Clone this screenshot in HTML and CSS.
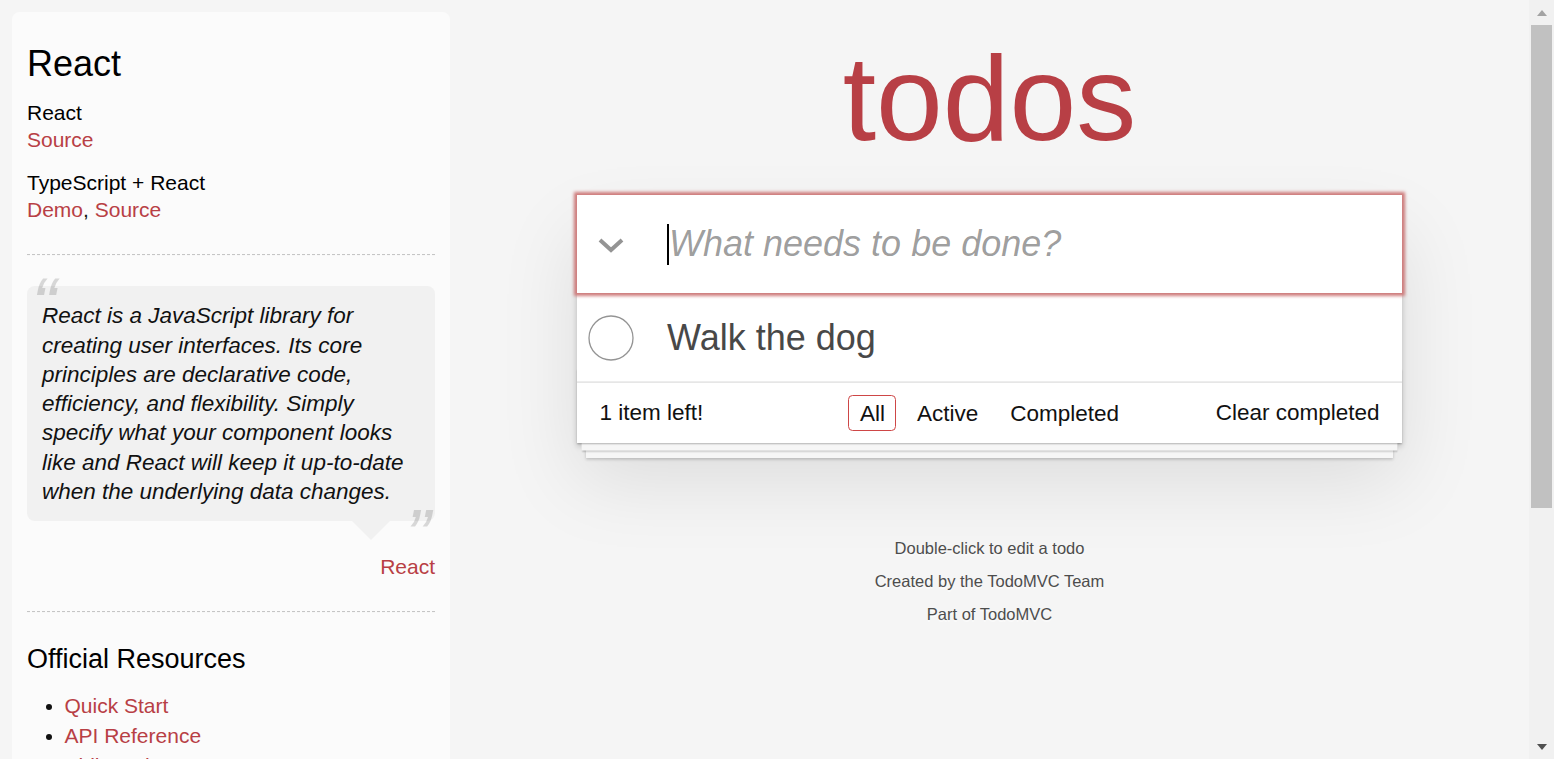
FILE: index.html
```html
<!DOCTYPE html>
<html lang="en">
<head>
<meta charset="utf-8">
<title>React • TodoMVC</title>
<link rel="stylesheet" href="styles.css">
</head>
<body>
<div class="page">
  <aside class="learn">
    <header class="learn-header">
      <h3 class="fw-title">React</h3>
      <div class="source-links">
        <h5 class="example-name">React</h5>
        <a class="link" href="#">Source</a>
        <h5 class="example-name">TypeScript + React</h5>
        <a class="link" href="#">Demo</a>, <a class="link" href="#">Source</a>
      </div>
    </header>
    <hr class="rule">
    <figure class="quote">
      <blockquote class="speech-bubble">
        <p class="quote-text">React is a JavaScript library for creating user interfaces. Its core principles are declarative code, efficiency, and flexibility. Simply specify what your component looks like and React will keep it up-to-date when the underlying data changes.</p>
      </blockquote>
      <figcaption class="quote-source"><a class="link" href="#">React</a></figcaption>
    </figure>
    <hr class="rule">
    <h4 class="group-heading">Official Resources</h4>
    <ul class="link-list">
      <li><a class="link" href="#">Quick Start</a></li>
      <li><a class="link" href="#">API Reference</a></li>
      <li><a class="link" href="#">Philosophy</a></li>
      <li><a class="link" href="#">React Community</a></li>
    </ul>
    <h4 class="group-heading">Community</h4>
    <ul class="link-list">
      <li><a class="link" href="#">ReactJS on Stack Overflow</a></li>
    </ul>
    <hr class="rule">
    <p class="learn-note"><em>If you have other helpful links to share, or find any of the links above no longer work, please <a class="link" href="#">let us know</a>.</em></p>
  </aside>

  <main class="app-column">
    <h1 class="title">todos</h1>
    <section class="todoapp">
      <div class="new-row">
        <span class="toggle-all">
          <svg width="28" height="16" viewBox="0 0 28 16" aria-hidden="true"><polyline points="3,3 14,13 25,3" fill="none" stroke="#949494" stroke-width="4"/></svg>
        </span>
        <div class="field">
          <span class="caret"></span>
          <input class="new-todo" type="text" placeholder="What needs to be done?">
        </div>
      </div>
      <ul class="todo-list">
        <li class="todo">
          <span class="toggle">
            <svg width="46" height="46" viewBox="0 0 46 46" aria-hidden="true"><circle cx="23" cy="23" r="22" fill="none" stroke="#949494" stroke-width="1.3"/></svg>
          </span>
          <span class="todo-label">Walk the dog</span>
        </li>
      </ul>
      <footer class="todo-footer">
        <span class="todo-count">1 item left!</span>
        <ul class="filters"><li><a class="filter selected" href="#">All</a></li><li><a class="filter" href="#">Active</a></li><li><a class="filter" href="#">Completed</a></li></ul>
        <button class="clear-completed" type="button">Clear completed</button>
      </footer>
    </section>
    <footer class="info">
      <p>Double-click to edit a todo</p>
      <p>Created by the TodoMVC Team</p>
      <p>Part of TodoMVC</p>
    </footer>
  </main>
</div>

<div class="scrollbar" aria-hidden="true">
  <span class="sb-button"><span class="sb-arrow-up"></span></span>
  <span class="sb-track"><span class="sb-thumb"></span></span>
  <span class="sb-button"><span class="sb-arrow-down"></span></span>
</div>
</body>
</html>
```
FILE: styles.css
```css
html {
  background: #f5f5f5;
  scrollbar-width: none;
}

body {
  margin: 0;
  background: #f5f5f5;
  color: #111;
  font-family: "Liberation Sans", Arial, Helvetica, sans-serif;
  font-size: 21px;
  line-height: 29.4px;
}

.page {
  display: flex;
  align-items: flex-start;
}

/* ---------- window scrollbar (drawn) ---------- */
.scrollbar {
  position: fixed;
  top: 0;
  right: 0;
  bottom: 0;
  width: 25px;
  display: flex;
  flex-direction: column;
  background: #f1f1f1;
}

.sb-button {
  flex: none;
  height: 25px;
  display: flex;
  align-items: center;
  justify-content: center;
}

.sb-arrow-up {
  width: 0;
  height: 0;
  border-left: 5.5px solid transparent;
  border-right: 5.5px solid transparent;
  border-bottom: 6px solid #a3a3a3;
}

.sb-arrow-down {
  width: 0;
  height: 0;
  border-left: 5.5px solid transparent;
  border-right: 5.5px solid transparent;
  border-top: 6px solid #505050;
}

.sb-track {
  flex: 1;
  display: flex;
  flex-direction: column;
}

.sb-thumb {
  height: 483px;
  margin: 0 2px;
  background: #c1c1c1;
}

/* ---------- sidebar ---------- */
.learn {
  flex: none;
  box-sizing: border-box;
  width: 438px;
  margin: 12px 0 0 12px;
  padding: 15px;
  border-radius: 7.5px;
  background: rgba(255, 255, 255, 0.6);
}

.link {
  color: #b83f45;
  text-decoration: none;
  font-weight: normal;
}

.fw-title,
.example-name,
.group-heading {
  margin: 15px 0;
  font-weight: normal;
  line-height: 1.2;
  color: #000;
}

.fw-title {
  font-size: 36px;
}

.group-heading {
  font-size: 27px;
}

.example-name {
  font-size: 21px;
  margin-bottom: 0;
}

.rule {
  height: 0;
  margin: 30px 0;
  border: 0;
  border-top: 1px dashed #c5c5c5;
  border-bottom: 1px dashed #f7f7f7;
}

.quote {
  margin: 30px 0;
}

.speech-bubble {
  position: relative;
  margin: 0;
  padding: 15px;
  background: rgba(0, 0, 0, 0.04);
  border-radius: 7.5px;
}

.speech-bubble::after {
  content: "";
  position: absolute;
  top: 100%;
  right: 45px;
  border: 19.5px solid transparent;
  border-top-color: rgba(0, 0, 0, 0.04);
}

.quote-text {
  margin: 0;
  font-size: 22.5px;
  line-height: 1.3;
  font-style: italic;
}

.quote-text::before {
  content: "\201C";
  position: absolute;
  top: -30px;
  left: 4.5px;
  font-size: 75px;
  opacity: 0.15;
}

.quote-text::after {
  content: "\201D";
  position: absolute;
  bottom: -63px;
  right: 4.5px;
  font-size: 75px;
  opacity: 0.15;
}

.quote-source {
  margin: 30.6px 0 0;
  text-align: right;
}

.link-list {
  margin: 0 0 45px 37.5px;
  padding: 0;
}

.link-list li {
  line-height: 30px;
}

.learn-note {
  margin: 0;
}

/* ---------- app ---------- */
.app-column {
  flex: none;
  width: 825px;
  margin-left: 127px;
}

.title {
  margin: 38px 0 37px;
  font-size: 120px;
  line-height: 120px;
  font-weight: normal;
  text-align: center;
  color: #b83f45;
}

.todoapp {
  position: relative;
  background: #fff;
  box-shadow: 0 3px 6px 0 rgba(0, 0, 0, 0.2), 0 37.5px 75px 0 rgba(0, 0, 0, 0.1);
}

.new-row {
  position: relative;
  z-index: 3;
  display: flex;
  align-items: center;
  height: 98px;
  background: #fff;
  box-shadow: 0 0 3px 3px #cf7d7d;
}

.toggle-all {
  flex: none;
  width: 68px;
  display: flex;
  justify-content: center;
  padding-top: 2px;
}

.field {
  flex: 1;
  display: flex;
  align-items: center;
  padding: 0 22px;
}

.caret {
  flex: none;
  width: 2px;
  height: 41px;
  background: #000;
}

.new-todo {
  flex: 1;
  min-width: 0;
  height: 50px;
  margin: 0;
  padding: 0;
  border: 0;
  outline: 0;
  background: transparent;
  font-family: inherit;
  font-size: 36px;
  line-height: 50px;
  color: #111;
}

.new-todo::placeholder {
  color: rgba(0, 0, 0, 0.4);
  font-style: italic;
  font-weight: 400;
}

.todo-list {
  position: relative;
  z-index: 2;
  margin: 0;
  padding: 0;
  list-style: none;
  border-top: 1px solid #e6e6e6;
}

.todo {
  display: flex;
  align-items: center;
  border-bottom: 1px solid #ededed;
}

.toggle {
  flex: none;
  width: 68px;
  display: flex;
  justify-content: center;
}

.todo-label {
  padding: 22px;
  font-size: 36px;
  line-height: 43px;
  color: #484848;
}

.todo-footer {
  position: relative;
  display: grid;
  grid-template-columns: 1fr auto 1fr;
  align-items: center;
  height: 30px;
  padding: 15px 22.5px;
  border-top: 1px solid #e6e6e6;
  font-size: 22.5px;
  line-height: 30px;
  color: #111;
}

.todo-footer::before {
  content: "";
  position: absolute;
  left: 0;
  right: 0;
  bottom: 0;
  height: 75px;
  overflow: hidden;
  pointer-events: none;
  box-shadow: 0 1.5px 1.5px rgba(0, 0, 0, 0.2),
    0 12px 0 -4.5px #f6f6f6,
    0 13.5px 1.5px -4.5px rgba(0, 0, 0, 0.2),
    0 24px 0 -9px #f6f6f6,
    0 25.5px 3px -9px rgba(0, 0, 0, 0.2);
}

.todo-count {
  justify-self: start;
}

.filters {
  margin: 0;
  padding: 0;
  list-style: none;
}

.filters li {
  display: inline;
}

.filter {
  margin: 4.5px;
  padding: 4.5px 10.5px;
  border: 1px solid transparent;
  border-radius: 4.5px;
  color: inherit;
  text-decoration: none;
}

.filter.selected {
  border-color: #ce4646;
}

.clear-completed {
  justify-self: end;
  margin: 0;
  padding: 0;
  border: 0;
  background: none;
  font-family: inherit;
  font-size: 22.5px;
  line-height: 28.5px;
  color: inherit;
  cursor: pointer;
}

.info {
  margin: 97px 0 0;
  color: #4d4d4d;
  font-size: 16.5px;
  text-align: center;
  text-shadow: 0 1.5px 0 rgba(255, 255, 255, 0.5);
}

.info p {
  margin: 16.5px 0;
  line-height: 1;
}
```
